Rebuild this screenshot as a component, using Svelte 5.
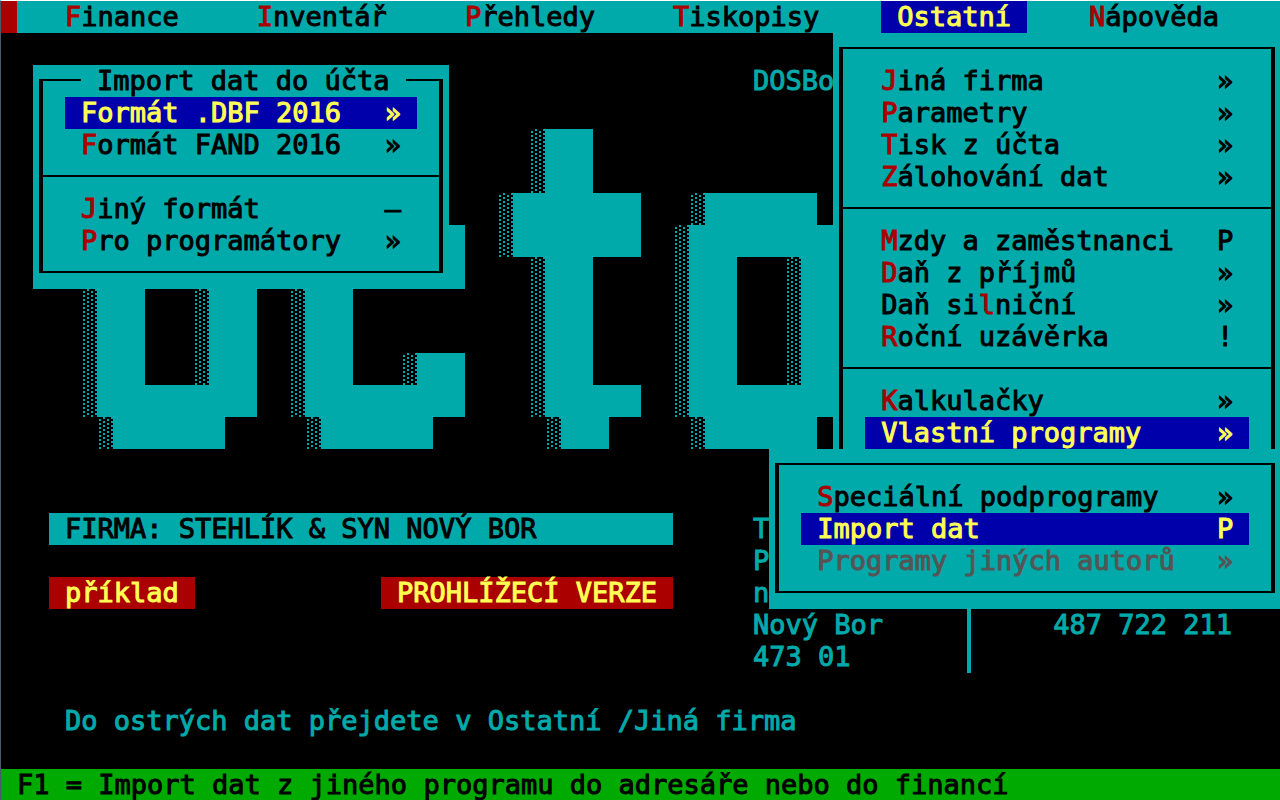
<script lang="ts">
  type Item = { label: string; mark: string; hot?: number; active?: boolean; disabled?: boolean };
  type Group = Item[];

  const CELL_W = 16;
  const CELL_H = 32;

  const bar = [
    { label: 'Finance' },
    { label: 'Inventář' },
    { label: 'Přehledy' },
    { label: 'Tiskopisy' },
    { label: 'Ostatní', open: true },
    { label: 'Nápověda' },
  ];

  const mainMenu: Group[] = [
    [
      { label: 'Jiná firma', mark: '»' },
      { label: 'Parametry', mark: '»' },
      { label: 'Tisk z účta', mark: '»' },
      { label: 'Zálohování dat', mark: '»' },
    ],
    [
      { label: 'Mzdy a zaměstnanci', mark: 'P' },
      { label: 'Daň z příjmů', mark: '»' },
      { label: 'Daň silniční', mark: '»', hot: 6 },
      { label: 'Roční uzávěrka', mark: '!' },
    ],
    [
      { label: 'Kalkulačky', mark: '»' },
      { label: 'Vlastní programy', mark: '»', active: true },
    ],
  ];

  const subMenu: Group[] = [
    [
      { label: 'Speciální podprogramy', mark: '»' },
      { label: 'Import dat', mark: 'P', active: true },
      { label: 'Programy jiných autorů', mark: '»', disabled: true },
    ],
  ];

  const importMenu: Group[] = [
    [
      { label: 'Formát .DBF 2016', mark: '»', active: true },
      { label: 'Formát FAND 2016', mark: '»' },
    ],
    [
      { label: 'Jiný formát', mark: '–' },
      { label: 'Pro programátory', mark: '»' },
    ],
  ];

  // block letters in character cells: [col, row, cols, rows]
  const solid = [
    // u
    [1, 3, 3, 5],
    [8, 3, 3, 5],
    [1, 8, 10, 1],
    [2, 9, 7, 1],
    // c
    [14, 3, 10, 2],
    [14, 5, 3, 3],
    [21, 7, 3, 1],
    [14, 8, 10, 1],
    [15, 9, 7, 1],
    // t
    [29, 0, 3, 9],
    [27, 2, 8, 2],
    [29, 8, 6, 1],
    [30, 9, 3, 1],
    // o
    [39, 2, 7, 1],
    [38, 3, 10, 1],
    [38, 4, 3, 4],
    [45, 4, 3, 4],
    [38, 8, 10, 1],
    [39, 9, 7, 1],
  ];
  const shade = [
    [0, 3, 1, 6],
    [7, 3, 1, 5],
    [1, 9, 1, 1],
    [13, 3, 1, 6],
    [20, 7, 1, 1],
    [14, 9, 1, 1],
    [28, 0, 1, 2],
    [26, 2, 1, 2],
    [28, 4, 1, 5],
    [29, 9, 1, 1],
    [38, 2, 1, 1],
    [37, 3, 1, 6],
    [44, 4, 1, 4],
    [38, 9, 1, 1],
  ];
</script>

{#snippet hotText(label: string, hot: number)}{label.slice(0, hot)}<span class="hot">{label[hot]}</span>{label.slice(hot + 1)}{/snippet}

{#snippet menu(groups: Group[])}
  {#each groups as group, i}
    {#if i > 0}<hr />{/if}
    {#each group as item}
      <button class="item" class:active={item.active} disabled={item.disabled}>
        <span>{@render hotText(item.label, item.hot ?? 0)}</span>
        <span>{item.mark}</span>
      </button>
    {/each}
  {/each}
{/snippet}

<div class="screen">
  <nav>
    <span class="corner"></span>
    {#each bar as entry}
      <div class="entry">
        <button class="top" class:active={entry.open}>{@render hotText(entry.label, 0)}</button>
        {#if entry.open}
          <div class="menu dropdown">
            <div class="frame">{@render menu(mainMenu)}</div>
          </div>
          <div class="menu submenu">
            <div class="frame">{@render menu(subMenu)}</div>
          </div>
        {/if}
      </div>
    {/each}
  </nav>

  <main>
    <p class="emulator">DOSBo</p>

    <svg class="logo" width={48 * CELL_W} height={10 * CELL_H} aria-hidden="true" shape-rendering="crispEdges">
      <defs>
        <pattern id="shade" width="8" height="4" patternUnits="userSpaceOnUse">
          <rect x="2" y="2" width="2" height="2" />
          <rect x="6" y="0" width="2" height="2" />
        </pattern>
      </defs>
      {#each shade as [x, y, w, h]}
        <rect x={x * CELL_W} y={y * CELL_H} width={w * CELL_W} height={h * CELL_H} fill="url(#shade)" />
      {/each}
      {#each solid as [x, y, w, h]}
        <rect x={x * CELL_W} y={y * CELL_H} width={w * CELL_W} height={h * CELL_H} />
      {/each}
    </svg>

    <div class="info">
      <div class="company">
        <p class="firm">FIRMA: STEHLÍK &amp; SYN NOVÝ BOR</p>
        <div class="badges">
          <span class="badge">příklad</span>
          <span class="badge">PROHLÍŽECÍ VERZE</span>
        </div>
      </div>
      <div class="contact">
        <address>T<br />P<br />n<br />Nový Bor<br />473 01</address>
        <p class="phone">487 722 211</p>
      </div>
    </div>

    <p class="hint">Do ostrých dat přejdete v Ostatní /Jiná firma</p>

    <section class="menu import">
      <div class="frame">
        <h2>Import dat do účta</h2>
        {@render menu(importMenu)}
      </div>
    </section>
  </main>

  <footer>F1 = Import dat z jiného programu do adresáře nebo do financí</footer>
</div>

<style>
  :global(body) {
    background: #000;
    overflow: hidden;
  }

  .screen {
    --teal: #00aaaa;
    --red: #aa0000;
    --blue: #0000aa;
    --yellow: #ffff55;
    box-sizing: border-box;
    display: flex;
    flex-direction: column;
    height: 100vh;
    overflow: hidden;
    border-top: 1px solid #fff;
    border-left: 1px solid #4a5a6c;
    background: #000;
    color: var(--teal);
    font: 27px/32px 'DejaVu Sans Mono', monospace;
    -webkit-text-stroke: 1px;
    white-space: nowrap;
  }

  p,
  h2 {
    margin: 0;
    font: inherit;
  }

  button {
    border: 0;
    margin: 0;
    padding: 0 16px;
    background: none;
    color: #000;
    font: inherit;
    text-align: left;
  }

  nav {
    display: flex;
    flex: none;
    gap: 46px;
    background: var(--teal);
  }

  .corner {
    width: 16px;
    margin-right: -14px;
    background: var(--red);
  }

  .entry {
    position: relative;
  }

  .top {
    display: block;
  }

  .hot {
    color: var(--red);
  }

  .active {
    background: var(--blue);
    color: var(--yellow);
  }

  .active .hot,
  :disabled .hot {
    color: inherit;
  }

  .menu {
    position: absolute;
    box-sizing: border-box;
    padding: 14px 6px 16px;
    background: var(--teal);
    color: #000;
  }

  .frame {
    display: flex;
    flex-direction: column;
    border: solid #000;
    border-width: 2px 4px;
    padding: 16px 0 14px;
  }

  .item {
    display: flex;
    justify-content: space-between;
    margin: 0 22px;
  }

  .item:disabled {
    color: #555;
  }

  hr {
    width: 100%;
    height: 2px;
    margin: 14px 0 16px;
    border: 0;
    background: #000;
  }

  .dropdown {
    top: 32px;
    left: -48px;
    width: 448px;
    z-index: 1;
  }

  .submenu {
    top: 448px;
    left: -112px;
    width: 512px;
    z-index: 2;
  }

  .import {
    top: 32px;
    left: 32px;
    width: 416px;
  }

  .import h2 {
    position: absolute;
    top: 0;
    left: 48px;
    padding: 0 16px;
    background: var(--teal);
  }

  main {
    position: relative;
    flex: 1 0 736px;
    display: flex;
    flex-direction: column;
    gap: 32px;
    padding-top: 32px;
    box-sizing: border-box;
  }

  .emulator {
    padding-left: 752px;
  }

  .logo {
    display: block;
    flex: none;
    margin-left: 80px;
    fill: var(--teal);
  }

  .info {
    display: grid;
    grid-template-columns: 624px 1fr;
    column-gap: 80px;
    padding: 32px 48px 0;
  }

  .company {
    display: flex;
    flex-direction: column;
    gap: 32px;
  }

  .firm {
    padding: 0 16px;
    background: var(--teal);
    color: #000;
  }

  .badges {
    display: flex;
    justify-content: space-between;
  }

  .badge {
    padding: 0 16px;
    background: var(--red);
    color: var(--yellow);
  }

  .contact {
    display: flex;
  }

  address {
    width: 214px;
    border-right: 4px solid var(--teal);
    font-style: normal;
  }

  .phone {
    flex: 1;
    align-self: end;
    padding-bottom: 32px;
    text-align: right;
  }

  .hint {
    padding-left: 64px;
  }

  footer {
    flex: none;
    padding: 0 16px;
    background: #00aa00;
    color: #000;
  }
</style>
